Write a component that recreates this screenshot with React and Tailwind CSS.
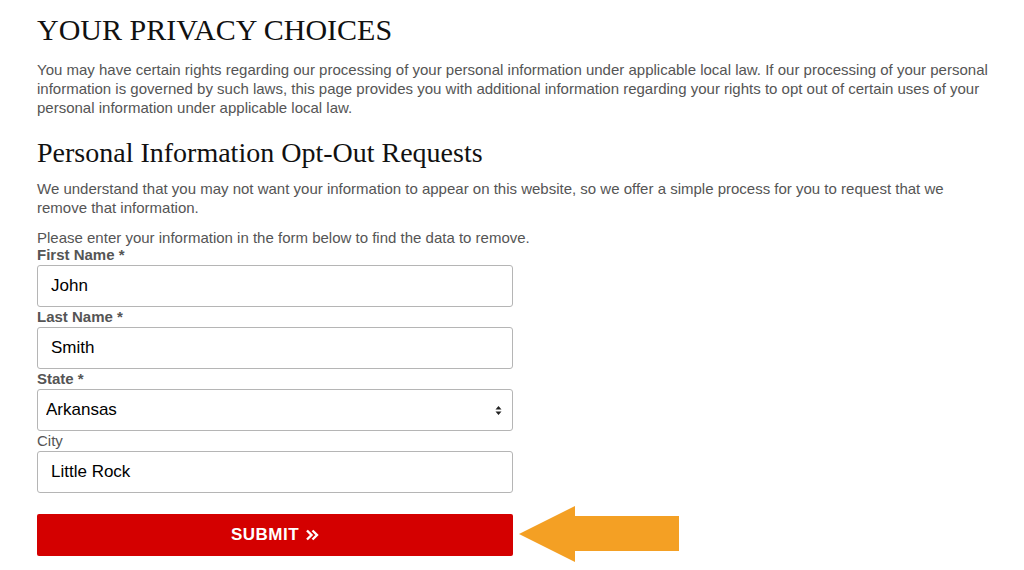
const Field = ({ label, value }) => (
  <div>
    <label className="block text-[15px] font-bold leading-[20px] text-[#555]">{label}</label>
    <input
      type="text"
      defaultValue={value}
      className="h-[42px] w-[476px] rounded-[3px] border border-[#b5b5b5] bg-white px-[13px] text-[17px] text-black outline-none"
    />
  </div>
);

const App = () => {
  return (
    <div className="min-h-[570px] bg-white pl-[37px] pr-[32px] pt-[12px] font-['Liberation_Sans',Arial,sans-serif] text-[#555]">
      <h1 className="font-['Liberation_Serif',serif] text-[30px] leading-[36px] text-[#111]">YOUR PRIVACY CHOICES</h1>
      <p className="mt-[12px] text-[15px] leading-[19px]">
        You may have certain rights regarding our processing of your personal information under applicable local law. If our processing of your personal information is governed by such laws, this page provides you with additional information regarding your rights to opt out of certain uses of your personal information under applicable local law.
      </p>
      <h2 className="mt-[20px] font-['Liberation_Serif',serif] text-[28px] leading-[32px] text-[#111]">Personal Information Opt-Out Requests</h2>
      <p className="mt-[10px] text-[15px] leading-[19px]">
        We understand that you may not want your information to appear on this website, so we offer a simple process for you to request that we remove that information.
      </p>
      <p className="mt-[11px] text-[15px] leading-[19px]">Please enter your information in the form below to find the data to remove.</p>
      <form className="-mt-[2px] flex flex-col" onSubmit={(e) => e.preventDefault()}>
        <Field label="First Name *" value="John" />
        <Field label="Last Name *" value="Smith" />
        <div>
          <label className="block text-[15px] font-bold leading-[20px] text-[#555]">State *</label>
          <div className="relative w-[476px]">
            <select
              defaultValue="Arkansas"
              className="h-[42px] w-full appearance-none rounded-[3px] border border-[#b5b5b5] bg-white px-[8px] text-[17px] text-black outline-none"
            >
              <option>Alabama</option>
              <option>Alaska</option>
              <option>Arizona</option>
              <option>Arkansas</option>
            </select>
            <svg className="pointer-events-none absolute right-[11px] top-[16px]" width="7" height="11" viewBox="0 0 7 11">
              <path d="M0.5 4.5 L3.5 1 L6.5 4.5 Z M0.5 6.5 L3.5 10 L6.5 6.5 Z" fill="#222" />
            </svg>
          </div>
        </div>
        <div>
          <label className="block text-[15px] leading-[20px] text-[#555]">City</label>
          <input
            type="text"
            defaultValue="Little Rock"
            className="h-[42px] w-[476px] rounded-[3px] border border-[#b5b5b5] bg-white px-[13px] text-[17px] text-black outline-none"
          />
        </div>
        <div className="mt-[13px] flex items-center">
          <button
            type="submit"
            className="flex h-[42px] w-[476px] items-center justify-center gap-[6px] rounded-[2px] bg-[#d40000] text-[17px] font-bold tracking-[0.5px] text-white"
          >
            SUBMIT
            <svg width="14" height="14" viewBox="0 0 14 14" fill="none" stroke="white" strokeWidth="2.4">
              <path d="M2 2.5 L6.5 7 L2 11.5 M7.5 2.5 L12 7 L7.5 11.5" />
            </svg>
          </button>
          <svg className="ml-[6px]" width="160" height="57" viewBox="0 0 160 57">
            <path d="M0 28 L56 0 L56 10 L160 10 L160 45 L56 45 L56 56 Z" fill="#f4a024" />
          </svg>
        </div>
      </form>
    </div>
  );
};

export default App;
